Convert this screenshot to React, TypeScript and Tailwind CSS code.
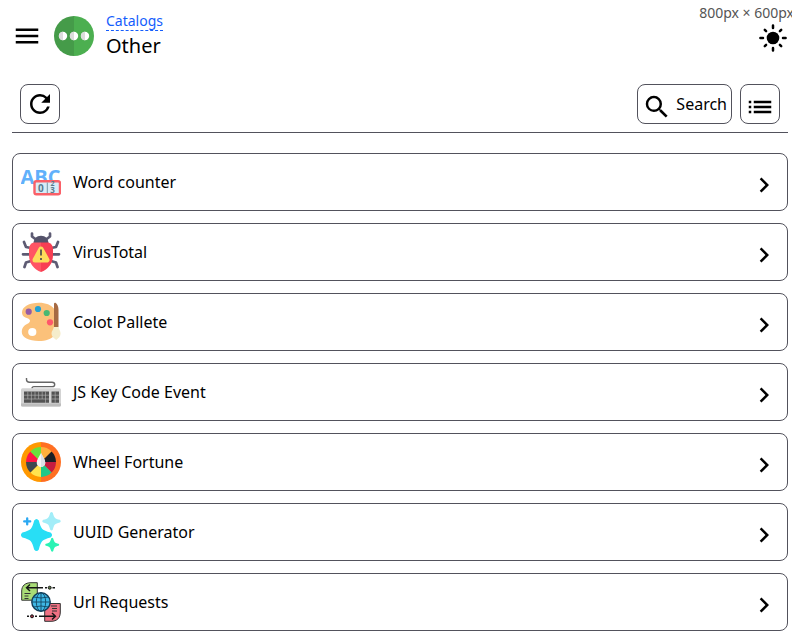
import type { ReactNode } from "react";
import { MdChevronRight, MdList, MdMenu, MdRefresh, MdSearch } from "react-icons/md";

function Picture({ children }: { children: ReactNode }) {
  return (
    <svg viewBox="0 0 40 40" className="size-10 shrink-0" fill="none" aria-hidden="true">
      {children}
    </svg>
  );
}

function DotsLogo() {
  return (
    <Picture>
      <path d="M20 0a20 20 0 0 0 0 40z" fill="#459b49" />
      <path d="M20 0a20 20 0 0 1 0 40z" fill="#4caf50" />
      {[9, 20, 31].map((x) => (
        <g key={x}>
          <circle cx={x} cy="20" r="4.2" fill="#fff" />
          <path d={`M${x} 15.8a4.2 4.2 0 0 0 0 8.4z`} fill="#dcdcdc" />
        </g>
      ))}
    </Picture>
  );
}

function SunIcon() {
  return (
    <svg viewBox="-15 -15 30 30" className="size-[30px]" stroke="currentColor" strokeWidth="2.5" strokeLinecap="round" aria-hidden="true">
      <circle r="6.3" stroke="none" />
      <path d="M-12.6 0h2.600M12.600 0h-2.600M0-12.600v2.600M0 12.600v-2.600" />
      <path d="M-8.200-8.200l1.300 1.300M8.200-8.200l-1.300 1.300M-8.200 8.200l1.300-1.300M8.200 8.200l-1.300-1.300" />
    </svg>
  );
}

function CounterIcon() {
  return (
    <Picture>
      <text x="-0.5" y="21.5" fontSize="20" className="font-['Open_Sans',sans-serif] font-bold" fill="#60b0fb">
        ABC
      </text>
      <rect x="13.5" y="19.3" width="25.5" height="13" rx="1.8" fill="#d9edf7" stroke="#fa6068" strokeWidth="2.4" />
      <path d="M26.3 20.5v10.6" stroke="#7596a6" strokeWidth="1" />
      <g className="font-['Open_Sans',sans-serif] font-bold" fill="#587b8f">
        <text x="17" y="29.5" fontSize="10">0</text>
        <text x="29.4" y="24.2" fontSize="7">2</text>
        <text x="29.2" y="31.2" fontSize="8">3</text>
      </g>
    </Picture>
  );
}

function BugIcon() {
  return (
    <Picture>
      <g stroke="#5d5b73" strokeWidth="2.7" strokeLinecap="round" strokeLinejoin="round">
        <path d="M11 1.5v3l4 3M29 1.5v3l-4 3" />
        <path d="M3 10l2 5 5 1M37 10l-2 5-5 1M2 22.3h7M38 22.3h-7M3.5 35l1.5-4.5 5-1.5M36.5 35l-1.5-4.5-5-1.5" />
      </g>
      <path d="M12.5 12c0-5.5 3-8.3 7.500-8.300s7.500 2.800 7.500 8.300z" fill="#54526a" />
      <path d="M20 10.500h-7.500Q8 12 8 17.500V23c0 8.500 5 14.500 12 17z" fill="#ff5464" />
      <path d="M20 10.500h7.500Q32 12 32 17.500V23c0 8.500-5 14.500-12 17z" fill="#f83f53" />
      <path d="M20 17l6 11H14z" fill="#fddb5b" stroke="#fddb5b" strokeWidth="5" strokeLinejoin="round" />
      <path d="M20 17.500v6M20 26v2" stroke="#66604f" strokeWidth="2" />
    </Picture>
  );
}

function PaletteIcon() {
  return (
    <Picture>
      <path d="M18 .8C8 .8 1 5 1 10.500c0 4 3.500 5 6 6 3 1.200 2.500 4-.5 5.200C2.500 23.300.8 26.500.8 30c0 5.500 7 9 17 9 7 0 13-2 15.500-5.500V7C30 3 25 .8 18 .8z" fill="#fbc17a" />
      <circle cx="11.3" cy="30" r="4.1" fill="#fff" />
      <circle cx="7.7" cy="9.7" r="3.1" fill="#955ba5" />
      <circle cx="17" cy="7" r="3.1" fill="#24a0d2" />
      <circle cx="25.7" cy="11" r="3.1" fill="#49b872" />
      <circle cx="29" cy="20.3" r="3.1" fill="#ff576b" />
      <path d="M33 25V2q0-1.500 1.500-1.200Q37.500 3 37.500 8v17z" fill="#a66a43" />
      <path d="M32.800 25h4.800c.5 3 2 4 2 6.500 0 3-2 4.500-4.400 6.500-2.400-2-4.700-3.500-4.700-6.500 0-2.500 1.800-3.500 2.300-6.500z" fill="#f5edcb" />
    </Picture>
  );
}

function KeyboardIcon() {
  return (
    <Picture>
      <path d="M5.500 6v1.500q0 2.700 3 2.700H31q2.700 0 2.700 2.200T31 14.600H13q-2 0-2 2" stroke="#666" strokeWidth="1.400" />
      <rect x="0" y="16.3" width="40" height="18.2" rx="1.5" fill="#d3d3d3" />
      <path d="M0 31.500h40V33q0 1.500-1.500 1.500h-37Q0 34.500 0 33z" fill="#bcbcbc" />
      <path d="M3 19.500h25v11.300H3zM30.500 19.500H38v11.300h-7.500z" fill="#535353" />
      <path d="M3 23.200h25M3 27h25M30.500 23.200H38M30.500 27H38M6.800 19.500v7.500M10.400 19.500v11.500M14 19.500v7.500M17.600 19.500v7.500M21.200 19.500v7.500M24.500 19.500v11.500M34.200 19.500v11.300" stroke="#b8b8b8" strokeWidth=".6" />
    </Picture>
  );
}

const wheelColors = ["#ffb03b", "#1c2026", "#c61c40", "#1fc888", "#ffe34f", "#3e4850", "#ff1744", "#6be03d"];

function WheelIcon() {
  return (
    <Picture>
      <path d="M20 0a20 20 0 0 0 0 40z" fill="#ff9800" />
      <path d="M20 0a20 20 0 0 1 0 40z" fill="#ff6f22" />
      {wheelColors.map((color, i) => (
        <path key={color} d="M20 20V5a15 15 0 0 1 10.600 4.400z" fill={color} transform={`rotate(${i * 45} 20 20)`} />
      ))}
      <path d="M20 11c2 4 4.300 7 4.300 9.700a4.300 4.300 0 0 1-8.600 0C15.700 18 18 15 20 11z" fill="#f5f5f5" />
      <path d="M20 11c2 4 4.300 7 4.300 9.700A4.300 4.300 0 0 1 20 25z" fill="#dce1e5" />
    </Picture>
  );
}

function SparklesIcon() {
  const star = "M-1.500-9Q0-11 1.500-9C3-3.500 3.500-3 9-1.500Q11 0 9 1.500C3.500 3 3 3.500 1.500 9Q0 11-1.500 9C-3 3.500-3.500 3-9 1.500Q-11 0-9-1.500C-3.500-3-3-3.500-1.500-9z";
  return (
    <Picture>
      <path d={star} fill="#28def5" transform="translate(15.500 23) scale(1.560 1.600)" />
      <path d={star} fill="#a2edf8" transform="translate(30.500 9.200) scale(.92)" />
      <path d={star} fill="#2af3b4" transform="translate(31.200 32.700) scale(.7)" />
      <path d="M6.200 6.400v6M3.200 9.400h6" stroke="#2ba8f2" strokeWidth="2.300" strokeLinecap="round" />
    </Picture>
  );
}

function RequestsIcon() {
  return (
    <Picture>
      <path d="M10 .7h6.300v17.500H.7V9C.7 4 4 .7 10 .7z" fill="#a9dc76" stroke="#333" />
      <path d="M23.700 21.500h15.600V30c0 6-3.300 9.300-9.300 9.300h-6.300z" fill="#ef7183" stroke="#333" />
      <path d="M3.500 11.500h6M3.500 14h4M3.500 16.500h4M30 24h6M31 26.500h5M31 29h5" stroke="#333" />
      <path d="M9 2.500L5.500 5.700 9 9M5.500 5.700H22M31 37.500l3.500-3.200L31 31M34.500 34.300H18" stroke="#161616" strokeWidth="1.400" />
      <path d="M24 5.700h2M31.500 5.700h2.500M16 34.300h-2M8 34.300H6" stroke="#161616" strokeWidth="1.400" />
      <circle cx="28.7" cy="5.7" r="1.500" fill="#5d7b45" stroke="#161616" />
      <circle cx="11" cy="34.3" r="1.500" fill="#9b3444" stroke="#161616" />
      <circle cx="20" cy="20" r="9.200" fill="#3eb7e5" stroke="#123b56" strokeWidth="1.400" />
      <path d="M10.800 20h18.400M12.500 15q7.500 2 15 0M12.500 25q7.500-2 15 0M20 10.800v18.400" stroke="#124763" strokeWidth=".9" />
      <ellipse cx="20" cy="20" rx="4.700" ry="9.200" stroke="#124763" strokeWidth=".9" />
    </Picture>
  );
}

const tools = [
  { title: "Word counter", Icon: CounterIcon },
  { title: "VirusTotal", Icon: BugIcon },
  { title: "Colot Pallete", Icon: PaletteIcon },
  { title: "JS Key Code Event", Icon: KeyboardIcon },
  { title: "Wheel Fortune", Icon: WheelIcon },
  { title: "UUID Generator", Icon: SparklesIcon },
  { title: "Url Requests", Icon: RequestsIcon },
];

export default function App() {
  return (
    <div className="relative overflow-hidden bg-white pr-1 pl-3 font-['Noto_Sans',sans-serif] text-black">
      <div className="absolute top-1 -right-0.5 text-sm leading-[18px] whitespace-nowrap text-[#555]">800px × 600px</div>

      <header className="flex h-[72px] items-center">
        <button type="button" aria-label="Menu">
          <MdMenu size={30} />
        </button>
        <div className="ml-3 flex grow items-center gap-3">
          <DotsLogo />
          <div className="flex flex-col items-start">
            <a href="#catalogs" className="border-b border-dashed border-blue-600 text-sm leading-[18px] text-blue-600">
              Catalogs
            </a>
            <h1 className="text-xl leading-[30px]">Other</h1>
          </div>
        </div>
        <button type="button" aria-label="Light theme" className="pt-1">
          <SunIcon />
        </button>
      </header>

      <main>
        <div className="flex items-center gap-2 border-b border-zinc-600 px-2 pt-3 pb-2">
          <button type="button" aria-label="Refresh" className="flex size-10 items-center justify-center rounded-lg border border-zinc-600">
            <MdRefresh size={30} />
          </button>
          <button type="button" className="ml-auto flex h-10 items-center gap-1 rounded-lg border border-zinc-600 px-1">
            <MdSearch size={30} className="mt-1.5" />
            Search
          </button>
          <button type="button" aria-label="List view" className="flex size-10 items-center justify-center rounded-lg border border-zinc-600">
            <MdList size={30} className="mt-1.5" />
          </button>
        </div>

        <ul className="mt-5 flex flex-col gap-3">
          {tools.map(({ title, Icon }) => (
            <li key={title}>
              <a href="#tool" className="flex items-center gap-3 rounded-lg border border-zinc-600 p-2">
                <Icon />
                <span className="grow">{title}</span>
                <MdChevronRight size={30} className="mt-1.5" />
              </a>
            </li>
          ))}
        </ul>
      </main>
    </div>
  );
}
